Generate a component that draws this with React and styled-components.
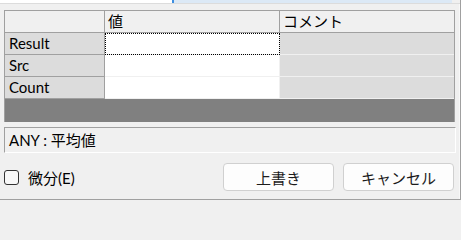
import React from "react";
import styled, { createGlobalStyle } from "styled-components";

const GlobalStyle = createGlobalStyle`
  html, body {
    margin: 0;
    padding: 0;
    background: #f0f0f0;
  }
  body {
    font-family: Lato, "Noto Sans CJK JP", sans-serif;
    font-size: 15px;
    color: #000;
  }
`;

const Window = styled.div`
  width: 461px;
  height: 200px;
  box-sizing: border-box;
  display: flex;
  flex-direction: column;
  background: #f0f0f0;
  border-right: 1px solid #a0a0a0;
  border-bottom: 1px solid #a0a0a0;
  box-shadow: inset -1px 0 0 #f8f8f8;
  overflow: hidden;
`;

const TopStrip = styled.div`
  height: 3px;
  display: flex;
  border-bottom: 1px solid #dcdcdc;
`;

const StripPart = styled.div`
  width: ${(p) => p.w}px;
  flex: ${(p) => (p.w ? "none" : "1")};
  background: ${(p) => p.bg};
`;

const Body = styled.div`
  flex: 1;
  display: flex;
  flex-direction: column;
  padding: 6px 5px 0 4px;
`;

const Grid = styled.div`
  width: 451px;
  box-sizing: border-box;
  border: 1px solid #a0a0a0;
  display: grid;
  grid-template-columns: 100px 175px 174px;
  grid-auto-rows: 22px;
  background: #808080;
`;

const cellStyles = {
  corner: "background:#f0f0f0;border-right:1px solid #a0a0a0;border-bottom:1px solid #a0a0a0;",
  colhead: "background:#f0f0f0;border-right:1px solid #a0a0a0;border-bottom:1px solid #a0a0a0;",
  lasthead: "background:#f0f0f0;border-bottom:1px solid #a0a0a0;",
  rowhead: "background:#dcdcdc;border-right:1px solid #a0a0a0;border-bottom:1px solid #a0a0a0;",
  value: "background:#ffffff;border-right:1px solid #f0f0f0;border-bottom:1px solid #f0f0f0;",
  comment: "background:#dcdcdc;border-bottom:1px solid #f0f0f0;",
};

const Cell = styled.div`
  box-sizing: border-box;
  padding-left: ${(p) => (p.kind === "rowhead" ? 4 : 3)}px;
  line-height: 21px;
  white-space: nowrap;
  overflow: hidden;
  ${(p) => cellStyles[p.kind]}
  ${(p) => p.focused && "outline: 1px dotted #000; outline-offset: -1px;"}
`;

const EmptyArea = styled.div`
  grid-column: 1 / -1;
  height: 23px;
  background: #808080;
`;

const InfoBox = styled.div`
  margin-top: 5px;
  width: 452px;
  height: 26px;
  box-sizing: border-box;
  border-top: 1px solid #a0a0a0;
  border-left: 1px solid #a0a0a0;
  border-bottom: 1px solid #ffffff;
  border-right: 1px solid #ffffff;
  padding-left: 4px;
  line-height: 24px;
`;

const Footer = styled.div`
  display: flex;
  align-items: center;
  margin-top: 10px;
`;

const CheckLabel = styled.label`
  display: flex;
  align-items: center;
  gap: 9px;
  flex: 1;
`;

const CheckBox = styled.span`
  width: 15px;
  height: 15px;
  box-sizing: border-box;
  border: 1px solid #333;
  border-radius: 3px;
  background: #f8f8f8;
`;

const Buttons = styled.div`
  display: flex;
  gap: 9px;
  margin-right: 1px;
`;

const Button = styled.button`
  width: 111px;
  height: 28px;
  box-sizing: border-box;
  background: #fdfdfd;
  border: 1px solid #d0d0d0;
  border-radius: 4px;
  font-family: Lato, "Noto Sans CJK JP", sans-serif;
  font-size: 15px;
  color: #1b1b1b;
  padding: 0;
`;

const rows = ["Result", "Src", "Count"];

export default function App() {
  return (
    <>
      <GlobalStyle />
      <Window>
        <TopStrip>
          <StripPart w={172} bg="#ffffff" />
          <StripPart w={2} bg="#3d8ee0" />
          <StripPart w={278} bg="#dce9f6" />
          <StripPart bg="#f0f0f0" />
        </TopStrip>
        <Body>
          <Grid>
            <Cell kind="corner" />
            <Cell kind="colhead">値</Cell>
            <Cell kind="lasthead">コメント</Cell>
            {rows.map((r, i) => (
              <React.Fragment key={r}>
                <Cell kind="rowhead">{r}</Cell>
                <Cell kind="value" focused={i === 0} />
                <Cell kind="comment" />
              </React.Fragment>
            ))}
            <EmptyArea />
          </Grid>
          <InfoBox>ANY : 平均値</InfoBox>
          <Footer>
            <CheckLabel>
              <CheckBox />
              微分(E)
            </CheckLabel>
            <Buttons>
              <Button>上書き</Button>
              <Button>キャンセル</Button>
            </Buttons>
          </Footer>
        </Body>
      </Window>
    </>
  );
}
